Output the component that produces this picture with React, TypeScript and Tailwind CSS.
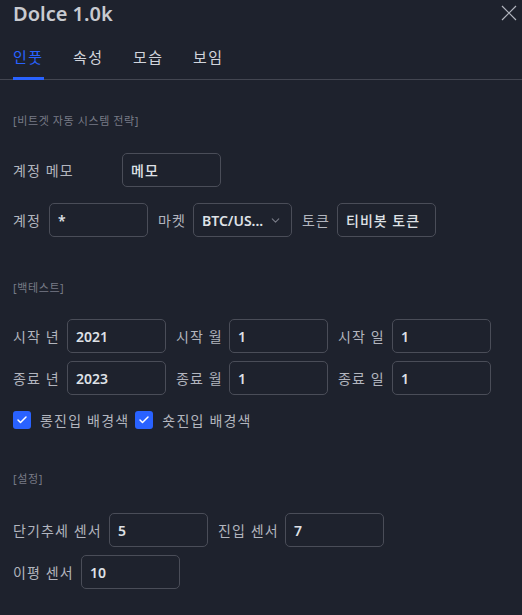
import React, { useState } from 'react';
import { ChevronDown, Check } from 'lucide-react';

const FONT = { fontFamily: '"Noto Sans", "Noto Sans CJK KR", sans-serif' };

const Field: React.FC<{ value: string; kr?: boolean }> = ({ value, kr }) => (
  <div
    className={`w-[99px] h-[34px] shrink-0 rounded-[5px] border border-[#4a4d58] flex items-center px-[8px] text-[14px] text-[#dfe1e6] ${
      kr ? 'font-medium tracking-[1px]' : 'font-semibold'
    }`}
  >
    {value}
  </div>
);

const Label: React.FC<{ text: string; className?: string }> = ({ text, className = '' }) => (
  <span className={`text-[14px] tracking-[1.1px] text-[#b2b5be] whitespace-nowrap ${className}`}>{text}</span>
);

const Section: React.FC<{ title: string }> = ({ title }) => (
  <div className="text-[11px] leading-[16px] tracking-[0.6px] text-[#787b86]">{title}</div>
);

const Box: React.FC<{ label: string }> = ({ label }) => (
  <label className="flex items-center gap-[9px]">
    <span className="w-[18px] h-[18px] rounded-[3px] bg-[#2962ff] flex items-center justify-center">
      <Check className="w-3 h-3 text-white" strokeWidth={3} />
    </span>
    <span className="text-[14px] tracking-[1.2px] text-[#b2b5be]">{label}</span>
  </label>
);

const App: React.FC = () => {
  const [tab, setTab] = useState('인풋');
  const tabs = ['인풋', '속성', '모습', '보임'];

  return (
    <div className="w-[522px] h-[615px] bg-[#1e222d] overflow-hidden" style={FONT}>
      {/* header */}
      <div className="flex items-center justify-between pl-[13px] pr-[5px] h-[27px]">
        <span className="text-[20px] font-semibold text-[#c8cad0] leading-[27px]">Dolce 1.0k</span>
        <svg width="16" height="16" viewBox="0 0 16 16" className="text-[#b2b5be] -mt-[2px]">
          <path d="M1 1 L15 15 M15 1 L1 15" stroke="currentColor" strokeWidth="1.2" />
        </svg>
      </div>

      {/* tabs */}
      <div className="mt-[9px] h-[44px] border-b border-[#434651] flex px-[13px] gap-[29px]">
        {tabs.map((t) => (
          <button
            key={t}
            onClick={() => setTab(t)}
            className={`relative w-[31px] h-full flex items-center text-[15px] tracking-[1.5px] whitespace-nowrap ${tab === t ? 'text-[#2962ff]' : 'text-[#d1d4dc]'}`}
          >
            {t}
            {tab === t && <span className="absolute left-0 right-0 -bottom-px h-[3px] bg-[#2962ff]" />}
          </button>
        ))}
      </div>

      <div className="px-[13px]">
        <div className="mt-[33px]">
          <Section title="[비트겟 자동 시스템 전략]" />
        </div>

        <div className="mt-[24px] flex items-center">
          <Label text="계정 메모" className="w-[109px]" />
          <Field value="메모" kr />
        </div>

        <div className="mt-[16px] flex items-center">
          <Label text="계정" className="w-[36px]" />
          <Field value="*" />
          <Label text="마켓" className="ml-[10px] w-[35px]" />
          <div className="w-[99px] h-[34px] shrink-0 rounded-[5px] border border-[#4a4d58] flex items-center justify-between pl-[8px] pr-[9px] text-[14px] font-semibold text-[#dfe1e6]">
            <span>BTC/US...</span>
            <ChevronDown className="w-[13px] h-[13px] text-[#787b86]" />
          </div>
          <Label text="토큰" className="ml-[10px] w-[35px]" />
          <Field value="티비봇 토큰" kr />
        </div>

        <div className="mt-[43px]">
          <Section title="[백테스트]" />
        </div>

        <div className="mt-[23px] flex flex-col gap-[8px]">
          {[
            ['시작', '2021', '1', '1'],
            ['종료', '2023', '1', '1'],
          ].map(([p, y, m, d]) => (
            <div key={p} className="flex items-center">
              <Label text={`${p} 년`} className="w-[54px]" />
              <Field value={y} />
              <Label text={`${p} 월`} className="ml-[10px] w-[53px]" />
              <Field value={m} />
              <Label text={`${p} 일`} className="ml-[10px] w-[54px]" />
              <Field value={d} />
            </div>
          ))}
        </div>

        <div className="mt-[13px] h-[24px] flex items-center gap-[6px]">
          <Box label="롱진입 배경색" />
          <Box label="숏진입 배경색" />
        </div>

        <div className="mt-[39px]">
          <Section title="[설정]" />
        </div>

        <div className="mt-[26px] flex flex-col gap-[8px]">
          <div className="flex items-center">
            <Label text="단기추세 센서" className="w-[96px]" />
            <Field value="5" />
            <Label text="진입 센서" className="ml-[10px] w-[67px]" />
            <Field value="7" />
          </div>
          <div className="flex items-center">
            <Label text="이평 센서" className="w-[68px]" />
            <Field value="10" />
          </div>
        </div>
      </div>
    </div>
  );
};

export default App;
